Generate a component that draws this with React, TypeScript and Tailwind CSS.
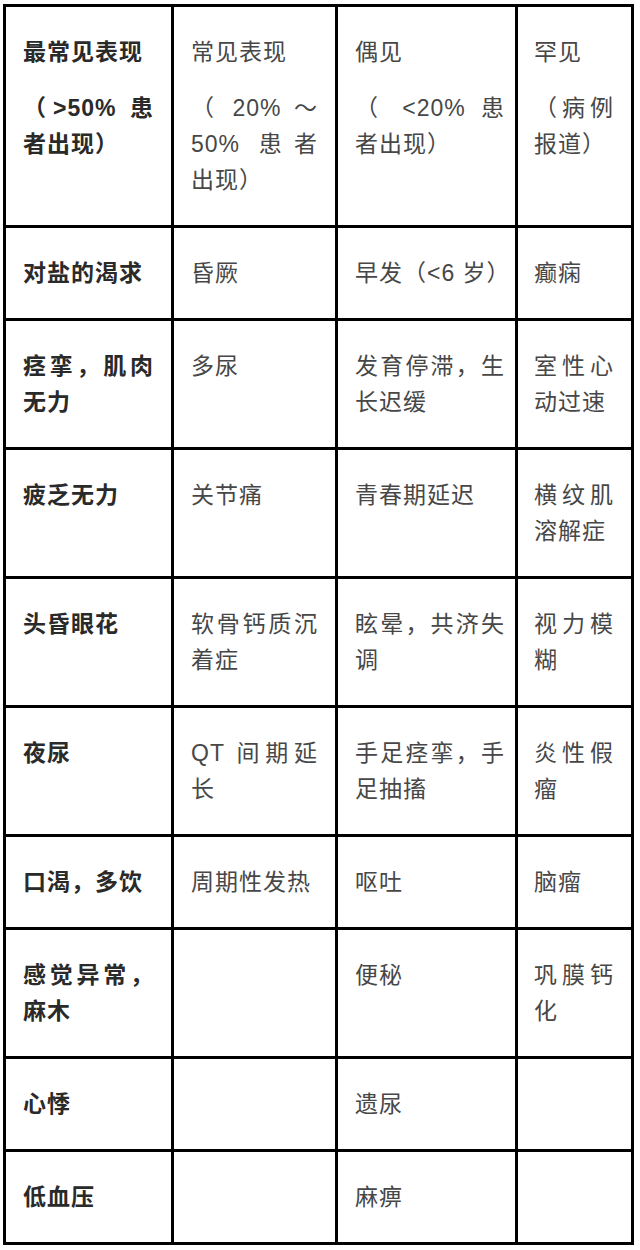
import React from 'react';

const header: [string, string][] = [
  ['最常见表现', '（>50% 患者出现）'],
  ['常见表现', '（ 20% ～ 50% 患者出现）'],
  ['偶见', '（ <20% 患者出现）'],
  ['罕见', '（病例报道）'],
];

const rows: string[][] = [
  ['对盐的渴求', '昏厥', '早发（<6 岁）', '癫痫'],
  ['痉挛，肌肉无力', '多尿', '发育停滞，生长迟缓', '室性心动过速'],
  ['疲乏无力', '关节痛', '青春期延迟', '横纹肌溶解症'],
  ['头昏眼花', '软骨钙质沉着症', '眩晕，共济失调', '视力模糊'],
  ['夜尿', 'QT 间期延长', '手足痉挛，手足抽搐', '炎性假瘤'],
  ['口渴，多饮', '周期性发热', '呕吐', '脑瘤'],
  ['感觉异常，麻木', '', '便秘', '巩膜钙化'],
  ['心悸', '', '遗尿', ''],
  ['低血压', '', '麻痹', ''],
];

// padding per column, measured from the screenshot
const cellPad = [
  'pl-[17px] pr-[17px]',
  'pl-[17px] pr-[17px]',
  'pl-[17px] pr-[10px]',
  'pl-[16px] pr-[17px]',
];

const Cell = ({ col, children }: { col: number; children: React.ReactNode }) => (
  <div
    className={`bg-white pt-[27px] pb-[27px] text-justify ${cellPad[col]} ${
      col === 0 ? 'font-semibold text-[#2a2a2a]' : 'font-normal text-[#474747]'
    }`}
  >
    {children}
  </div>
);

export default function App() {
  return (
    <div className="min-h-[1250px] bg-white pt-[4px] pl-[3px] font-['Liberation_Sans','Noto_Sans_CJK_SC',sans-serif] text-[23px] leading-[36px] tracking-[1px]">
      <div className="grid w-[631px] grid-cols-[165px_161px_177px_113px] gap-[3px] bg-black p-[3px]">
        {header.map(([title, note], i) => (
          <Cell key={`h${i}`} col={i}>
            <p>{title}</p>
            <p className="mt-[20px]">{note}</p>
          </Cell>
        ))}

        {rows.map((row, r) =>
          row.map((text, c) => (
            <Cell key={`${r}-${c}`} col={c}>
              {/* 早发（<6 岁） stays on one line in the original */}
              <p className={r === 0 && c === 2 ? 'whitespace-nowrap' : ''}>{text}</p>
            </Cell>
          ))
        )}
      </div>
    </div>
  );
}
